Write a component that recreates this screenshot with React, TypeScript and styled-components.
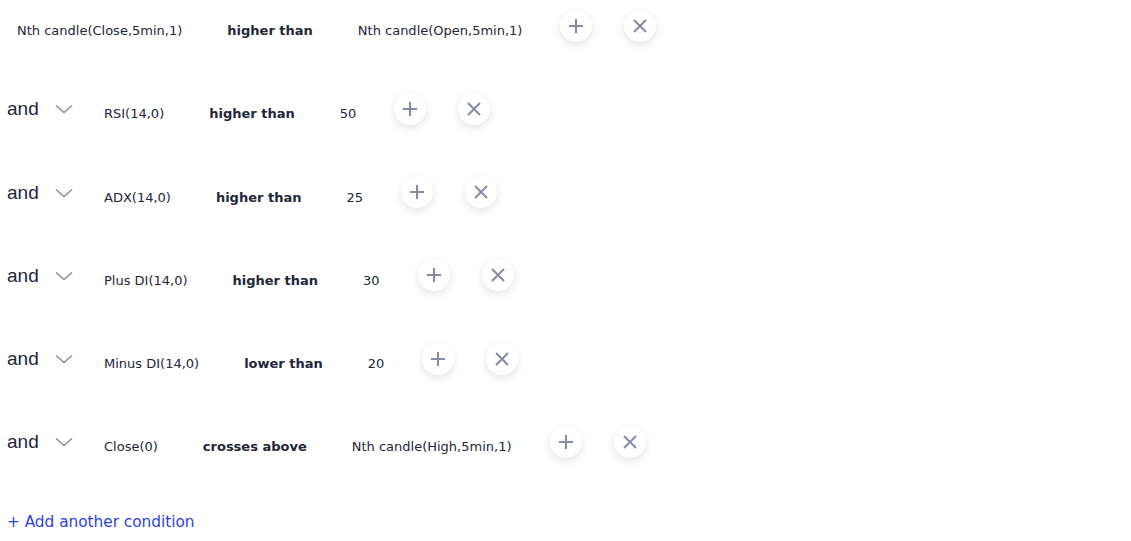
import React from 'react';
import styled, { createGlobalStyle } from 'styled-components';

const GlobalStyle = createGlobalStyle`
  body {
    margin: 0;
    background: #fff;
    font-family: "DejaVu Sans", Verdana, sans-serif;
    color: #23263a;
  }
`;

type Condition = {
  left: string;
  op: string;
  right: string;
};

const conditions: Condition[] = [
  { left: 'Nth candle(Close,5min,1)', op: 'higher than', right: 'Nth candle(Open,5min,1)' },
  { left: 'RSI(14,0)', op: 'higher than', right: '50' },
  { left: 'ADX(14,0)', op: 'higher than', right: '25' },
  { left: 'Plus DI(14,0)', op: 'higher than', right: '30' },
  { left: 'Minus DI(14,0)', op: 'lower than', right: '20' },
  { left: 'Close(0)', op: 'crosses above', right: 'Nth candle(High,5min,1)' },
];

function ConditionBuilder() {
  return (
    <Wrapper>
      <GlobalStyle />
      {conditions.map((c, i) => (
        <Row key={i}>
          {i > 0 && (
            <Joiner>
              <span>and</span>
              <Chevron viewBox="0 0 18 10">
                <path d="M1 1.5 L9 8.5 L17 1.5" />
              </Chevron>
            </Joiner>
          )}
          <Chip>{c.left}</Chip>
          <Chip bold>{c.op}</Chip>
          <Chip>{c.right}</Chip>
          <Actions>
            <RoundBtn aria-label="add">
              <svg viewBox="0 0 16 16" width="16" height="16">
                <path d="M8 1 V15 M1 8 H15" />
              </svg>
            </RoundBtn>
            <RoundBtn aria-label="remove">
              <svg viewBox="0 0 16 16" width="16" height="16">
                <path d="M2 2 L14 14 M14 2 L2 14" />
              </svg>
            </RoundBtn>
          </Actions>
        </Row>
      ))}
      <AddLink>+ Add another condition</AddLink>
    </Wrapper>
  );
}

const Wrapper = styled.div`
  display: flex;
  flex-direction: column;
  padding: 10px 0 0 7px;
`;

const Row = styled.div`
  display: flex;
  flex-direction: row;
  align-items: center;
  height: 40px;
  margin-bottom: 43.3px;
`;

const Joiner = styled.div`
  display: flex;
  align-items: center;
  width: 87px;
  margin-top: -8px;
  span {
    font-family: "Liberation Sans", Arial, sans-serif;
    font-size: 19px;
    color: #23263a;
    width: 48px;
  }
`;

const Chevron = styled.svg`
  width: 18px;
  height: 10px;
  fill: none;
  stroke: #8a8ca6;
  stroke-width: 1.6;
`;

const Chip = styled.div<{ bold?: boolean }>`
  padding: 0 10px;
  margin-right: 25px;
  font-size: 13px;
  font-weight: ${p => (p.bold ? 700 : 400)};
  white-space: nowrap;
  color: #23263a;
  margin-top: 1px;
`;

const Actions = styled.div`
  display: flex;
  gap: 32px;
  margin-left: 3px;
  margin-top: -9px;
`;

const RoundBtn = styled.button`
  width: 32px;
  height: 32px;
  border-radius: 50%;
  border: none;
  background: #fff;
  box-shadow: 0 3px 8px rgba(40, 44, 80, 0.13);
  display: flex;
  align-items: center;
  justify-content: center;
  padding: 0;
  svg {
    fill: none;
    stroke: #868aa6;
    stroke-width: 2;
  }
`;

const AddLink = styled.a`
  font-family: "DejaVu Sans", Verdana, sans-serif;
  font-size: 15.3px;
  color: #2b3fe0;
  margin-top: 3px;
  cursor: pointer;
`;

export default ConditionBuilder;
